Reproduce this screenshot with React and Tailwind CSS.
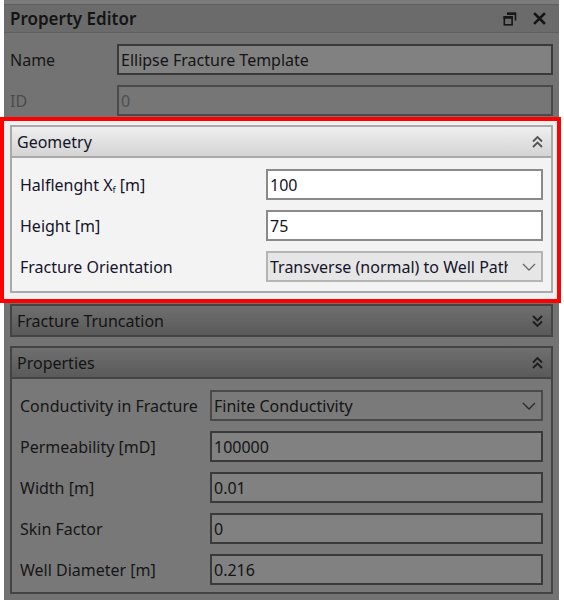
import React from "react";

const FONT = { fontFamily: '"Noto Sans", "Open Sans", sans-serif' };

// ─── Small drawings ──────────────────────────────────────────────────────────

function RestoreIcon() {
  return (
    <svg width="14" height="14" viewBox="0 0 14 14" className="text-[#151515]">
      <path d="M4 1.5h8.5v7" fill="none" stroke="currentColor" strokeWidth="1.6" />
      <rect x="4" y="0.5" width="9" height="2.4" fill="currentColor" />
      <rect x="1.3" y="5" width="7.8" height="7.8" fill="none" stroke="currentColor" strokeWidth="1.6" />
      <rect x="0.5" y="4.3" width="9.4" height="2.4" fill="currentColor" />
    </svg>
  );
}

function CloseIcon() {
  return (
    <svg width="13" height="13" viewBox="0 0 13 13" className="text-[#151515]">
      <path d="M2 2l9 9M11 2l-9 9" stroke="currentColor" strokeWidth="2.6" strokeLinecap="square" />
    </svg>
  );
}

function DoubleChevron({ up, color }) {
  const d = up ? "M2 6.5l4.5-4.5 4.5 4.5M2 12l4.5-4.5 4.5 4.5" : "M2 2l4.5 4.5L11 2M2 7.5l4.5 4.5L11 7.5";
  return (
    <svg width="13" height="14" viewBox="0 0 13 14" style={{ color }}>
      <path d={d} fill="none" stroke="currentColor" strokeWidth="1.9" />
    </svg>
  );
}

function ChevronDown({ color }) {
  return (
    <svg width="14" height="8" viewBox="0 0 14 8" style={{ color }}>
      <path d="M1 1l6 6 6-6" fill="none" stroke="currentColor" strokeWidth="1.3" />
    </svg>
  );
}

// ─── Inputs ──────────────────────────────────────────────────────────────────

function TextBox({ value, light, disabled }) {
  const cls = light
    ? "border-[#8a8a8a] bg-white text-[#14142a]"
    : disabled
    ? "border-[#4a4a4a] bg-[#767676] text-[#4e4e4e]"
    : "border-[#3a3a3a] bg-[#818181] text-[#141414]";
  return (
    <div className={`flex h-[31px] min-w-0 flex-1 items-center overflow-hidden whitespace-nowrap border-2 pl-[2px] text-[16px] ${cls}`}>
      {value}
    </div>
  );
}

function ComboBox({ value, light }) {
  const cls = light
    ? "border-[#b4b4b4] bg-[#e6e6e6] text-[#14142a]"
    : "border-[#4a4a4a] bg-[#7a7a7a] text-[#141414]";
  return (
    <div className={`flex h-[31px] min-w-0 flex-1 items-center gap-[14px] border-2 pl-[2px] pr-[5px] text-[16px] ${cls}`}>
      <div className="min-w-0 flex-1 overflow-hidden whitespace-nowrap">{value}</div>
      <ChevronDown color={light ? "#6a6a6a" : "#2a2a2a"} />
    </div>
  );
}

function Row({ label, labelWidth, children, labelClass }) {
  return (
    <div className="flex items-center">
      <div className={`shrink-0 whitespace-nowrap text-[16px] ${labelClass}`} style={{ width: labelWidth }}>
        {label}
      </div>
      {children}
    </div>
  );
}

// ─── Group boxes ─────────────────────────────────────────────────────────────

function GroupHeader({ title, light, collapsed }) {
  const cls = light
    ? "border-[#a9a9a9] bg-gradient-to-b from-[#efefef] to-[#d4d4d4] text-[#14142a]"
    : "border-[#444444] bg-gradient-to-b from-[#6f6f6f] to-[#5a5a5a] text-[#141414]";
  return (
    <div className={`flex h-[33px] items-center justify-between border-2 pl-[5px] pr-[7px] text-[16px] ${cls}`}>
      <span>{title}</span>
      <DoubleChevron up={!collapsed} color={light ? "#555555" : "#1e1e1e"} />
    </div>
  );
}

export default function App() {
  const dimLabel = "text-[#161616]";
  const lightLabel = "text-[#14142a]";
  return (
    <div className="flex h-[600px] w-[564px] overflow-hidden bg-white" style={FONT}>
      <div className="ml-[4px] flex h-full w-[555px] flex-col bg-[#737373]">
        {/* Top strip + title bar */}
        <div className="h-[5px] border-b border-[#5e5e5e] bg-[#7b7b7b]" />
        <div className="flex h-[28px] items-center justify-between border-b border-[#5e5e5e] bg-[#6b6b6b] pl-[6px] pr-[13px]">
          <span className="text-[17px] font-semibold text-[#141414]">Property Editor</span>
          <div className="flex items-center gap-[16px]">
            <RestoreIcon />
            <CloseIcon />
          </div>
        </div>

        {/* Name / ID */}
        <div className="flex flex-col gap-[10px] pl-[6px] pr-[6px] pt-[11px]">
          <Row label="Name" labelWidth={107} labelClass={dimLabel}>
            <TextBox value="Ellipse Fracture Template" />
          </Row>
          <Row label="ID" labelWidth={107} labelClass="text-[#4c4c4c]">
            <TextBox value="0" disabled />
          </Row>
        </div>

        {/* Highlighted Geometry section */}
        <div className="-ml-[4px] mt-[1px] w-[561px] border-4 border-[#ff0000] bg-[#f0f0f0] pb-[6px] pl-[6px] pr-[4px] pt-[4px]">
          <div className="border-2 border-t-0 border-[#a9a9a9] bg-[#f4f3f4]">
            <div className="-mx-[2px]">
              <GroupHeader title="Geometry" light />
            </div>
            <div className="flex flex-col gap-[10px] pb-[9px] pl-[8px] pr-[8px] pt-[11px]">
              <Row label={<>Halflenght X<sub className="text-[9px]">f</sub> [m]</>} labelWidth={246} labelClass={lightLabel}>
                <TextBox value="100" light />
              </Row>
              <Row label="Height [m]" labelWidth={246} labelClass={lightLabel}>
                <TextBox value="75" light />
              </Row>
              <Row label="Fracture Orientation" labelWidth={246} labelClass={lightLabel}>
                <ComboBox value="Transverse (normal) to Well Path" light />
              </Row>
            </div>
          </div>
        </div>

        {/* Fracture Truncation (collapsed) */}
        <div className="ml-[6px] mr-[6px] mt-[1px]">
          <GroupHeader title="Fracture Truncation" collapsed />
        </div>

        {/* Properties */}
        <div className="ml-[6px] mr-[6px] mt-[9px] border-2 border-t-0 border-[#444444] bg-[#787878]">
          <div className="-mx-[2px]">
            <GroupHeader title="Properties" />
          </div>
          <div className="flex flex-col gap-[10px] pb-[7px] pl-[8px] pr-[8px] pt-[11px]">
            <Row label="Conductivity in Fracture" labelWidth={190} labelClass={dimLabel}>
              <ComboBox value="Finite Conductivity" />
            </Row>
            <Row label="Permeability [mD]" labelWidth={190} labelClass={dimLabel}>
              <TextBox value="100000" />
            </Row>
            <Row label="Width [m]" labelWidth={190} labelClass={dimLabel}>
              <TextBox value="0.01" />
            </Row>
            <Row label="Skin Factor" labelWidth={190} labelClass={dimLabel}>
              <TextBox value="0" />
            </Row>
            <Row label="Well Diameter [m]" labelWidth={190} labelClass={dimLabel}>
              <TextBox value="0.216" />
            </Row>
          </div>
        </div>
      </div>
    </div>
  );
}
